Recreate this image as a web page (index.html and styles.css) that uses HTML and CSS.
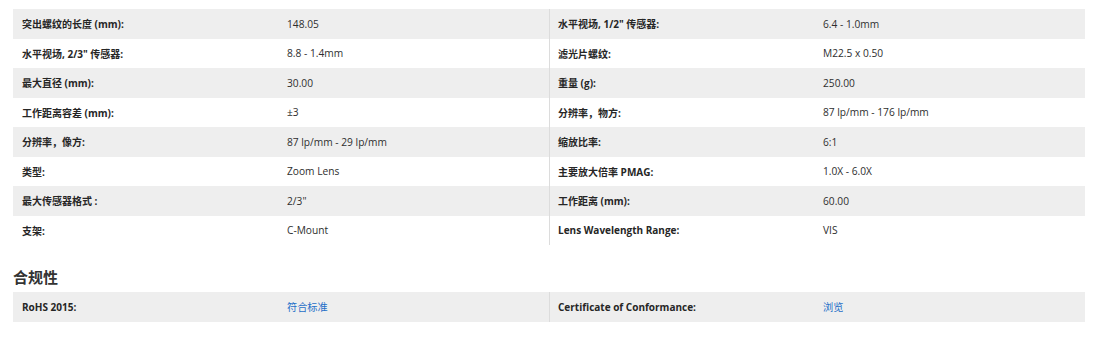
FILE: index.html
```html
<!DOCTYPE html>
<html lang="zh">
<head>
<meta charset="utf-8">
<link rel="stylesheet" href="styles.css">
</head>
<body>
<div class="page">
  <div class="specs">
    <div class="row"><div class="lbl">突出螺纹的长度 (mm):</div><div class="val">148.05</div><div class="lbl split">水平视场, 1/2" 传感器:</div><div class="val">6.4 - 1.0mm</div></div>
    <div class="row"><div class="lbl">水平视场, 2/3" 传感器:</div><div class="val">8.8 - 1.4mm</div><div class="lbl split">滤光片螺纹:</div><div class="val">M22.5 x 0.50</div></div>
    <div class="row"><div class="lbl">最大直径 (mm):</div><div class="val">30.00</div><div class="lbl split">重量 (g):</div><div class="val">250.00</div></div>
    <div class="row"><div class="lbl">工作距离容差 (mm):</div><div class="val">±3</div><div class="lbl split">分辨率，物方:</div><div class="val">87 lp/mm - 176 lp/mm</div></div>
    <div class="row"><div class="lbl">分辨率，像方:</div><div class="val">87 lp/mm - 29 lp/mm</div><div class="lbl split">缩放比率:</div><div class="val">6:1</div></div>
    <div class="row"><div class="lbl">类型:</div><div class="val">Zoom Lens</div><div class="lbl split">主要放大倍率 PMAG:</div><div class="val">1.0X - 6.0X</div></div>
    <div class="row"><div class="lbl">最大传感器格式 :</div><div class="val">2/3"</div><div class="lbl split">工作距离 (mm):</div><div class="val">60.00</div></div>
    <div class="row"><div class="lbl">支架:</div><div class="val">C-Mount</div><div class="lbl split">Lens Wavelength Range:</div><div class="val">VIS</div></div>
  </div>
  <h2 class="section-title">合规性</h2>
  <div class="specs">
    <div class="row"><div class="lbl">RoHS 2015:</div><div class="val"><a class="link" href="#">符合标准</a></div><div class="lbl split">Certificate of Conformance:</div><div class="val"><a class="link" href="#">浏览</a></div></div>
  </div>
</div>
</body>
</html>
```

FILE: styles.css
```css
html, body {
  margin: 0;
  padding: 0;
  background: #fff;
}
.page {
  padding: 9px 10px 0 13px;
  width: 1072px;
  font-family: "Open Sans", "Noto Sans CJK SC", sans-serif;
  font-size: 10px;
  color: #333;
}
.specs {
  display: flex;
  flex-direction: column;
}
.row {
  display: grid;
  grid-template-columns: 274px 262px 274px 262px;
  height: 29.5px;
  align-items: stretch;
}
.row:nth-child(odd) {
  background: #eeeeee;
}
.lbl, .val {
  display: flex;
  align-items: center;
  white-space: nowrap;
}
.lbl {
  padding-left: 9px;
  font-weight: 700;
  color: #262626;
}
.val {
  padding-left: 0;
  font-size: 10.2px;
  color: #2e2e2e;
}
.split {
  border-left: 1px solid #dcdcdc;
  padding-left: 8px;
}
.section-title {
  margin: 0;
  padding-top: 22px;
  padding-bottom: 5px;
  line-height: 20px;
  font-size: 15px;
  font-weight: 600;
  color: #333;
}
.link {
  color: #1f6fc8;
  text-decoration: none;
}
```
